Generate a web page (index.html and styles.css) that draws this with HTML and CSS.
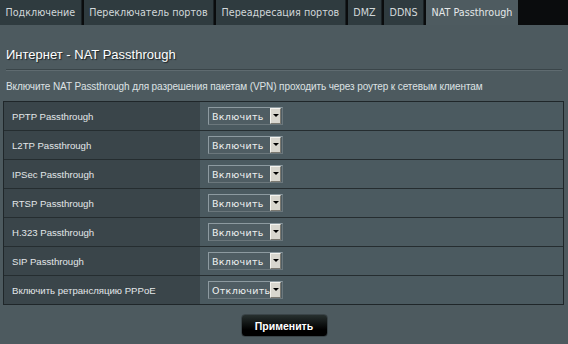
FILE: index.html
```html
<!DOCTYPE html>
<html>
<head>
<meta charset="utf-8">
<link rel="stylesheet" href="styles.css">
</head>
<body>
<div class="tabs">
  <div class="tab">Подключение</div>
  <div class="tab">Переключатель портов</div>
  <div class="tab">Переадресация портов</div>
  <div class="tab">DMZ</div>
  <div class="tab">DDNS</div>
  <div class="tab active">NAT Passthrough</div>
</div>
<div class="content">
  <h1 class="title">Интернет - NAT Passthrough</h1>
  <div class="rule"></div>
  <p class="desc">Включите NAT Passthrough для разрешения пакетам (VPN) проходить через роутер к сетевым клиентам</p>
  <div class="table">
    <div class="row"><div class="label">PPTP Passthrough</div><div class="value"><div class="select"><span class="sel-text">Включить</span><span class="arrow"></span></div></div></div>
    <div class="row"><div class="label">L2TP Passthrough</div><div class="value"><div class="select"><span class="sel-text">Включить</span><span class="arrow"></span></div></div></div>
    <div class="row"><div class="label">IPSec Passthrough</div><div class="value"><div class="select"><span class="sel-text">Включить</span><span class="arrow"></span></div></div></div>
    <div class="row"><div class="label">RTSP Passthrough</div><div class="value"><div class="select"><span class="sel-text">Включить</span><span class="arrow"></span></div></div></div>
    <div class="row"><div class="label">H.323 Passthrough</div><div class="value"><div class="select"><span class="sel-text">Включить</span><span class="arrow"></span></div></div></div>
    <div class="row"><div class="label">SIP Passthrough</div><div class="value"><div class="select"><span class="sel-text">Включить</span><span class="arrow"></span></div></div></div>
    <div class="row"><div class="label">Включить ретрансляцию PPPoE</div><div class="value"><div class="select"><span class="sel-text">Отключить</span><span class="arrow"></span></div></div></div>
  </div>
  <div class="actions"><button class="apply">Применить</button></div>
</div>
</body>
</html>
```
FILE: styles.css
```css
html, body {
  margin: 0;
  padding: 0;
  width: 568px;
  height: 344px;
  overflow: hidden;
  background: #4d5a5f;
}
.tabs {
  display: flex;
  gap: 2px;
  height: 25px;
  background: #0a0c0d;
}
.tab {
  display: flex;
  align-items: center;
  padding: 0 5.5px;
  background: #2f3b3f;
  color: #d2d8da;
  font-family: "DejaVu Sans", sans-serif;
  font-size: 9.6px;
  border-right: 1px solid #1a2124;
}
.tab.active {
  background: #4e5b60;
  color: #e4e8e9;
  border-right: none;
}
.content {
  padding: 0 4px 0 3px;
}
.title {
  margin: 0;
  padding: 22px 0 0 3px;
  height: 21px;
  font-family: "Liberation Sans", Arial, sans-serif;
  font-size: 13px;
  font-weight: normal;
  color: #ffffff;
  text-shadow: 1px 1px 1px #1a2226;
}
.rule {
  margin: 1px 2px 0 3px;
  height: 1px;
  background: #3a4549;
  border-bottom: 1px solid #5f6b70;
}
.desc {
  margin: 0;
  padding: 10px 0 0 3px;
  height: 30px;
  font-family: "Liberation Sans", Arial, sans-serif;
  font-size: 10px;
  letter-spacing: -0.1px;
  color: #dde2e4;
  box-sizing: border-box;
}
.table {
  border: 1px solid #1f2629;
}
.row {
  display: flex;
  height: 28px;
  border-top: 1px solid #252d30;
}
.row:first-child {
  border-top: none;
}
.label {
  width: 196px;
  box-sizing: border-box;
  background: #3a454a;
  display: flex;
  align-items: center;
  padding-left: 8px;
  font-family: "Liberation Sans", Arial, sans-serif;
  font-size: 9.6px;
  color: #e3e7e9;
}
.value {
  flex: 1;
  background: #4b5a60;
  display: flex;
  align-items: center;
  padding-left: 8px;
}
.select {
  display: flex;
  align-items: center;
  justify-content: space-between;
  width: 75px;
  height: 18px;
  box-sizing: border-box;
  border: 1px solid #8d9aa0;
  border-right-color: #6b777c;
  border-bottom-color: #6b777c;
  background: #4f5d63;
  padding: 0 1px 0 3px;
}
.sel-text {
  font-family: "DejaVu Sans", sans-serif;
  font-size: 9.5px;
  color: #eef0f0;
  letter-spacing: 0.3px;
}
.arrow {
  width: 11px;
  height: 16px;
  box-sizing: border-box;
  background: #d8d6ce;
  border: 1px solid #f4f3ee;
  border-right-color: #7a7870;
  border-bottom-color: #7a7870;
  position: relative;
}
.arrow::after {
  content: "";
  position: absolute;
  left: 2px;
  top: 5px;
  border-left: 3px solid transparent;
  border-right: 3px solid transparent;
  border-top: 3px solid #000;
}
.actions {
  display: flex;
  justify-content: center;
  padding-top: 9px;
}
.apply {
  width: 87px;
  height: 23px;
  border: 1px solid #3a4448;
  border-radius: 4px;
  background: linear-gradient(#27302f, #000000 70%);
  color: #ffffff;
  font-family: "Liberation Sans", Arial, sans-serif;
  font-size: 10.5px;
  font-weight: bold;
  margin-left: 1px;
}
```
